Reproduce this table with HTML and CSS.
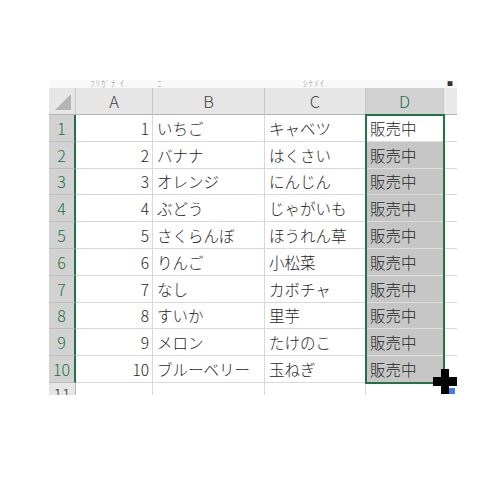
FILE: index.html
```html
<!DOCTYPE html>
<html lang="ja">
<head>
<meta charset="utf-8">
<link rel="stylesheet" href="styles.css">
</head>
<body>
<div class="page">
  <div class="sheet">
    <div class="strip s0"></div>
    <div class="strip s1"><span>ﾌﾘｶﾞﾅ ｲ</span></div>
    <div class="strip s2"><span>ﾆ</span></div>
    <div class="strip s3"><span>ｼﾅﾒｲ</span></div>
    <div class="strip s4"></div>
    <div class="strip s5"><span>■</span></div>

    <div class="ch corner"><svg width="26" height="26" viewBox="0 0 26 26"><polygon points="22,6 22,22 6,22" fill="#b5b5b5"/></svg></div>
    <div class="ch">A</div>
    <div class="ch">B</div>
    <div class="ch">C</div>
    <div class="ch chsel">D</div>
    <div class="ch che"></div>

    <div class="rh">1</div><div class="c num">1</div><div class="c">いちご</div><div class="c">キャベツ</div><div class="c d act">販売中</div><div class="c e"></div>
    <div class="rh">2</div><div class="c num">2</div><div class="c">バナナ</div><div class="c">はくさい</div><div class="c d">販売中</div><div class="c e"></div>
    <div class="rh">3</div><div class="c num">3</div><div class="c">オレンジ</div><div class="c">にんじん</div><div class="c d">販売中</div><div class="c e"></div>
    <div class="rh">4</div><div class="c num">4</div><div class="c">ぶどう</div><div class="c">じゃがいも</div><div class="c d">販売中</div><div class="c e"></div>
    <div class="rh">5</div><div class="c num">5</div><div class="c">さくらんぼ</div><div class="c">ほうれん草</div><div class="c d">販売中</div><div class="c e"></div>
    <div class="rh">6</div><div class="c num">6</div><div class="c">りんご</div><div class="c">小松菜</div><div class="c d">販売中</div><div class="c e"></div>
    <div class="rh">7</div><div class="c num">7</div><div class="c">なし</div><div class="c">カボチャ</div><div class="c d">販売中</div><div class="c e"></div>
    <div class="rh">8</div><div class="c num">8</div><div class="c">すいか</div><div class="c">里芋</div><div class="c d">販売中</div><div class="c e"></div>
    <div class="rh">9</div><div class="c num">9</div><div class="c">メロン</div><div class="c">たけのこ</div><div class="c d">販売中</div><div class="c e"></div>
    <div class="rh">10</div><div class="c num">10</div><div class="c">ブルーベリー</div><div class="c">玉ねぎ</div><div class="c d">販売中</div><div class="c e"></div>

    <div class="rh last">11</div><div class="c lastc"></div><div class="c lastc"></div><div class="c lastc"></div><div class="c lastc"></div><div class="c e lastc"></div>

    <div class="selbox"></div>
    <svg class="cursor" width="24" height="26" viewBox="0 0 24 26">
      <rect x="16" y="19" width="6" height="6" fill="#3f7fe6"/>
      <rect x="8" y="0" width="8" height="25" fill="#000"/>
      <rect x="0" y="8" width="24" height="9" fill="#000"/>
    </svg>
  </div>
</div>
</body>
</html>
```

FILE: styles.css
```css
html, body {
  margin: 0;
  padding: 0;
  background: #ffffff;
}

.page {
  padding: 80px 0 0 49px;
}

.sheet {
  position: relative;
  display: grid;
  grid-template-columns: 27px 77px 112px 101px 78px 13px;
  grid-template-rows: 8px 27px repeat(10, 26.8px) 12px;
  width: 408px;
  font-family: "Noto Sans CJK JP", "Noto Sans", sans-serif;
  font-weight: 300;
  font-size: 15.5px;
  color: #262626;
}

.strip {
  background: #f9f9f9;
  overflow: hidden;
  display: flex;
  align-items: flex-end;
  font-size: 9px;
  line-height: 8px;
  color: #9a9a9a;
  letter-spacing: 1px;
}
.strip span {
  white-space: nowrap;
}
.s1 { padding-left: 14px; }
.s2 { padding-left: 4px; }
.s3 { padding-left: 38px; }
.s5 { color: #333; font-size: 6px; padding-left: 3px; }

.ch {
  background: #e6e6e6;
  border-right: 1px solid #c8c8c8;
  border-bottom: 1px solid #b4b4b4;
  box-sizing: border-box;
  display: flex;
  align-items: center;
  justify-content: center;
  color: #444;
  font-size: 16.5px;
}
.corner {
  align-items: flex-end;
  justify-content: flex-end;
}
.corner svg { display: block; }
.chsel {
  background: #d2d2d2;
  color: #217346;
}
.che {
  background: #e9e9e9;
  border-right: none;
}

.rh {
  background: #d2d2d2;
  color: #217346;
  border-bottom: 1px solid #bdbdbd;
  border-right: 2px solid #217346;
  box-sizing: border-box;
  display: flex;
  align-items: center;
  justify-content: center;
  font-size: 16px;
}
.rh.last {
  background: #e6e6e6;
  color: #444;
  border-right: 1px solid #b4b4b4;
  border-bottom: none;
  align-items: flex-start;
  overflow: hidden;
  line-height: 16px;
  padding-top: 3px;
}

.c {
  border-right: 1px solid #d9d9d9;
  border-bottom: 1px solid #d9d9d9;
  box-sizing: border-box;
  display: flex;
  align-items: center;
  padding-left: 4px;
  white-space: nowrap;
  overflow: hidden;
}
.num {
  justify-content: flex-end;
  padding-left: 0;
  padding-right: 3px;
}
.d {
  background: #c6c6c6;
  border-bottom-color: #dcdcdc;
}
.d.act {
  background: #ffffff;
}
.e {
  border-right: none;
}
.lastc {
  border-bottom: none;
}

.selbox {
  position: absolute;
  left: 316px;
  top: 34px;
  width: 80px;
  height: 270px;
  border: 2px solid #217346;
  box-sizing: border-box;
  pointer-events: none;
}

.cursor {
  position: absolute;
  left: 384px;
  top: 289px;
}
```
